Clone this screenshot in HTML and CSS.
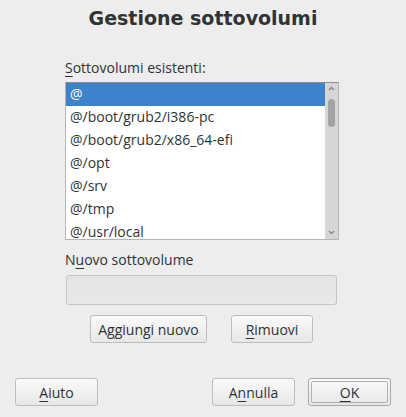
FILE: index.html
```html
<!DOCTYPE html>
<html lang="it">
<head>
<meta charset="utf-8">
<title>Gestione sottovolumi</title>
<link rel="stylesheet" href="styles.css">
</head>
<body>
<div class="dialog">
  <h1 class="title">Gestione sottovolumi</h1>
  <div class="content">
    <div class="label label-list"><u>S</u>ottovolumi esistenti:</div>
    <div class="listbox">
      <div class="items">
        <div class="row selected">@</div>
        <div class="row">@/boot/grub2/i386-pc</div>
        <div class="row">@/boot/grub2/x86_64-efi</div>
        <div class="row">@/opt</div>
        <div class="row">@/srv</div>
        <div class="row">@/tmp</div>
        <div class="row">@/usr/local</div>
      </div>
      <div class="scrollbar">
        <svg class="arrow" width="7" height="5" viewBox="0 0 7 5"><path d="M1 4 L3.5 1.5 L6 4" fill="none" stroke="#8a8a8a" stroke-width="1.5"/></svg>
        <div class="track"><div class="thumb"></div></div>
        <svg class="arrow" width="7" height="5" viewBox="0 0 7 5"><path d="M1 1 L3.5 3.5 L6 1" fill="none" stroke="#8a8a8a" stroke-width="1.5"/></svg>
      </div>
    </div>
    <div class="label label-new">N<u>u</u>ovo sottovolume</div>
    <div class="input"></div>
  </div>
  <div class="actions">
    <button class="btn btn-add">A<u>g</u>giungi nuovo</button>
    <button class="btn btn-remove"><u>R</u>imuovi</button>
  </div>
  <div class="footer">
    <button class="btn btn-foot"><u>A</u>iuto</button>
    <div class="spacer"></div>
    <button class="btn btn-foot">A<u>n</u>nulla</button>
    <button class="btn btn-foot btn-default"><span class="inner"><u>O</u>K</span></button>
  </div>
</div>
</body>
</html>
```

FILE: styles.css
```css
html, body {
  margin: 0;
  padding: 0;
  background: #ededed;
}
body {
  font-family: "Open Sans", "Noto Sans", sans-serif;
  font-size: 14px;
  color: #2e3436;
}
.dialog {
  width: 406px;
  height: 417px;
  box-sizing: border-box;
  display: flex;
  flex-direction: column;
  padding-bottom: 11px;
}
.title {
  margin: 0;
  padding-top: 6px;
  line-height: 24px;
  font-family: "DejaVu Sans", sans-serif;
  font-size: 19px;
  font-weight: bold;
  text-align: center;
  color: #2e3436;
}
.content {
  padding-left: 65px;
  width: 274px;
}
u {
  text-decoration: underline;
  text-underline-offset: 3px;
  text-decoration-thickness: 1px;
}
.label {
  line-height: 18px;
  color: #2e3436;
}
.label-list {
  margin-top: 29px;
  margin-bottom: 5px;
}
.listbox {
  height: 158px;
  box-sizing: border-box;
  border: 1px solid #b5b5b5;
  border-top-color: #8e8e8e;
  background: #ffffff;
  display: flex;
  overflow: hidden;
}
.items {
  flex: 1;
  overflow: hidden;
}
.row {
  height: 23px;
  line-height: 22px;
  padding-left: 4px;
  white-space: nowrap;
  color: #2e3436;
}
.row.selected {
  background: #3c82cc;
  color: #ffffff;
}
.scrollbar {
  width: 13px;
  background: #d6d6d6;
  display: flex;
  flex-direction: column;
  align-items: center;
  padding: 3px 0 4px;
  box-sizing: border-box;
}
.arrow {
  display: block;
  flex: none;
}
.track {
  flex: 1;
  width: 100%;
  display: flex;
  justify-content: center;
  padding-top: 8px;
}
.thumb {
  width: 7px;
  height: 28px;
  border-radius: 4px;
  background: #a3a3a3;
}
.label-new {
  margin-top: 11px;
  margin-bottom: 6px;
}
.input {
  margin-left: 1px;
  width: 271px;
  height: 30px;
  box-sizing: border-box;
  border: 1px solid #c4c4c4;
  border-radius: 3px;
  background: linear-gradient(#e4e4e4, #e9e9e9);
}
.actions {
  margin-top: 10px;
  display: flex;
  justify-content: center;
  gap: 24px;
  padding-right: 3px;
}
.btn {
  font-family: inherit;
  font-size: 14px;
  color: #2e3436;
  height: 28px;
  box-sizing: border-box;
  border: 1px solid #bdbdbd;
  border-radius: 3px;
  background: linear-gradient(#fafafa, #e7e7e7);
  padding: 0;
  margin: 0;
  cursor: default;
}
.btn-add {
  width: 117px;
}
.btn-remove {
  width: 82px;
}
.footer {
  margin-top: auto;
  display: flex;
  align-items: center;
  padding: 0 15px;
  gap: 13px;
}
.spacer {
  flex: 1;
}
.btn-foot {
  width: 83px;
}
.btn-default {
  padding: 2px;
  border-color: #a8a8a8;
}
.btn-default .inner {
  display: flex;
  align-items: center;
  justify-content: center;
  height: 100%;
  box-sizing: border-box;
  border: 1px solid #b0b0b0;
  border-radius: 2px;
}
```
